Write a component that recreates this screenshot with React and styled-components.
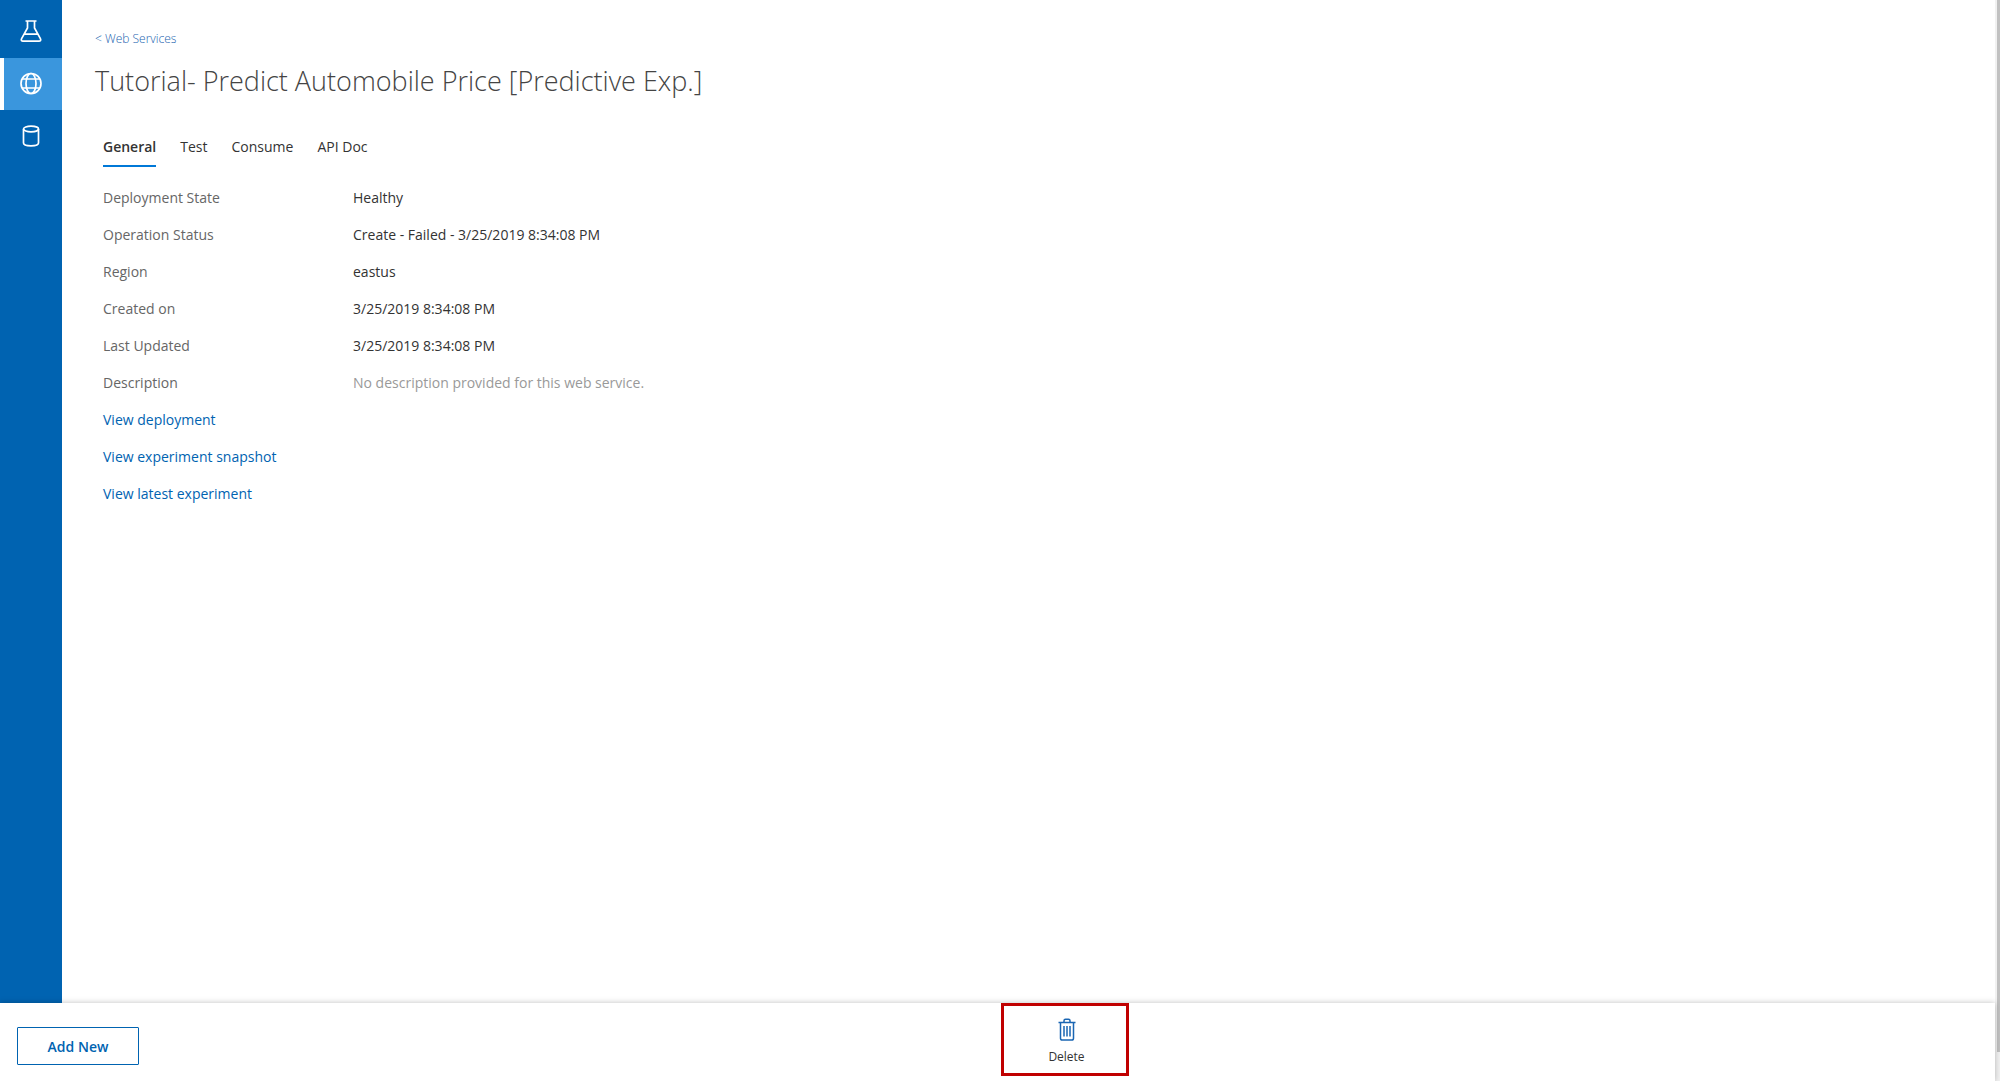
import React from "react";
import styled, { createGlobalStyle } from "styled-components";

const GlobalStyle = createGlobalStyle`
  *, *::before, *::after { box-sizing: border-box; }
  body {
    margin: 0;
    background: #ffffff;
    color: #333333;
    font-family: "Open Sans", "Noto Sans", sans-serif;
    font-size: 14px;
    line-height: 22px;
  }
  button { font-family: inherit; cursor: pointer; }
  a { text-decoration: none; }
`;

const Page = styled.div`
  display: grid;
  grid-template-columns: 1fr 5px;
  height: 100vh;
`;

const Shell = styled.div`
  display: grid;
  grid-template-rows: 1fr auto;
  min-width: 0;
`;

const Body = styled.div`
  display: flex;
  min-height: 0;
`;

const Sidebar = styled.nav`
  flex: 0 0 62px;
  display: flex;
  flex-direction: column;
  padding-top: 6px;
  background: #0063b1;
`;

const SidebarLink = styled.a`
  display: flex;
  align-items: center;
  justify-content: center;
  width: 62px;
  height: 52px;
  padding-right: ${(p) => (p.$active ? 4 : 0)}px;
  border-left: ${(p) => (p.$active ? "4px solid #ffffff" : "0")};
  background: ${(p) => (p.$active ? "#3a96dd" : "transparent")};

  svg {
    width: 22px;
    height: 24px;
    fill: none;
    stroke: #ffffff;
    stroke-width: 1.7;
  }
`;

const Main = styled.main`
  flex: 1;
  min-width: 0;
  padding: 28px 32px;
  overflow: auto;
`;

const BackLink = styled.a`
  display: block;
  padding-left: 1px;
  color: #2465b0;
  font-size: 12px;
  font-weight: 300;
`;

const Title = styled.h1`
  margin: 10px 0 0;
  padding-left: 1px;
  color: #444444;
  font-size: 27px;
  font-weight: 300;
  line-height: 42px;
`;

const Tabs = styled.div`
  display: flex;
  gap: 24px;
  margin-top: 34px;
  padding-left: 9px;
`;

const Tab = styled.button`
  padding: 0 0 7px;
  border: 0;
  border-bottom: 2px solid ${(p) => (p.$active ? "#0078d7" : "transparent")};
  background: none;
  color: #333333;
  font-size: 14px;
  font-weight: ${(p) => (p.$active ? 600 : 400)};
  line-height: 22px;
`;

const Details = styled.div`
  display: flex;
  flex-direction: column;
  gap: 15px;
  margin-top: 20px;
  padding-left: 9px;
`;

const Properties = styled.dl`
  display: grid;
  grid-template-columns: 250px 1fr;
  row-gap: 15px;
  margin: 0;
`;

const Label = styled.dt`
  color: #666666;
`;

const Value = styled.dd`
  margin: 0;
  color: ${(p) => (p.$muted ? "#999999" : "#333333")};
`;

const DetailLink = styled.a`
  align-self: flex-start;
  color: #0063b1;
`;

const Footer = styled.footer`
  display: grid;
  grid-template-columns: 1fr 1fr;
  align-items: start;
  height: 78px;
  background: #ffffff;
  box-shadow: 0 0 6px rgba(0, 0, 0, 0.25);
  position: relative;
`;

const AddButton = styled.button`
  justify-self: start;
  width: 122px;
  height: 38px;
  margin: 24px 0 0 17px;
  border: 1px solid #0063b1;
  border-radius: 1px;
  background: #ffffff;
  color: #0063b1;
  font-size: 14px;
  font-weight: 600;
`;

const DeleteButton = styled.button`
  justify-self: start;
  display: flex;
  flex-direction: column;
  align-items: center;
  gap: 5px;
  width: 128px;
  height: 73px;
  margin-left: 3px;
  padding: 12px 0 0 4px;
  border: 3px solid #c00000;
  background: #ffffff;
  color: #333333;
  font-size: 12px;
  line-height: 22px;

  svg {
    width: 18px;
    height: 23px;
    fill: none;
    stroke: #1a66b3;
    stroke-width: 1.5;
  }
`;

const ScrollTrack = styled.div`
  padding-left: 2px;
  background: #f1f1f1;
`;

const ScrollThumb = styled.div`
  height: 97.3%;
  background: #c1c1c1;
`;

const FlaskIcon = () => (
  <svg viewBox="0 0 22 24" aria-hidden="true">
    <path d="M5.500 1h11M7.500 1v7L1.600 18.600c-.8 1.500 0 2.600 1.400 2.600h16c1.400 0 2.200-1.100 1.400-2.600L14.500 8V1M4.500 14.200h13" />
  </svg>
);

const GlobeIcon = () => (
  <svg viewBox="0 0 22 24" aria-hidden="true">
    <circle cx="11" cy="11.500" r="10" />
    <ellipse cx="11" cy="11.500" rx="5" ry="10" />
    <path d="M2 7h18M2 16h18" />
  </svg>
);

const DatabaseIcon = () => (
  <svg viewBox="0 0 22 24" aria-hidden="true">
    <ellipse cx="11" cy="5" rx="7.500" ry="2.800" />
    <path d="M3.500 5v14c0 1.600 3.300 2.800 7.500 2.800s7.500-1.200 7.500-2.800V5" />
  </svg>
);

const TrashIcon = () => (
  <svg viewBox="0 0 18 23" aria-hidden="true">
    <path d="M.5 4.500h17M6 4.500V2.800C6 1.800 6.600 1.300 7.500 1.300h3c.9 0 1.500.5 1.500 1.500v1.700M2.500 4.500v15.700c0 1 .7 1.800 1.700 1.800h9.600c1 0 1.700-.8 1.700-1.800V4.500M6 8v10.500M9 8v10.500M12 8v10.500" />
  </svg>
);

const sections = [
  { name: "Experiments", Icon: FlaskIcon },
  { name: "Web Services", Icon: GlobeIcon, active: true },
  { name: "Datasets", Icon: DatabaseIcon },
];

const tabs = ["General", "Test", "Consume", "API Doc"];

const properties = [
  ["Deployment State", "Healthy"],
  ["Operation Status", "Create - Failed - 3/25/2019 8:34:08 PM"],
  ["Region", "eastus"],
  ["Created on", "3/25/2019 8:34:08 PM"],
  ["Last Updated", "3/25/2019 8:34:08 PM"],
  ["Description", "No description provided for this web service.", true],
];

const links = ["View deployment", "View experiment snapshot", "View latest experiment"];

export default function App() {
  return (
    <>
      <GlobalStyle />
      <Page>
        <Shell>
          <Body>
            <Sidebar>
              {sections.map(({ name, Icon, active }) => (
                <SidebarLink key={name} href="#" aria-label={name} $active={active}>
                  <Icon />
                </SidebarLink>
              ))}
            </Sidebar>
            <Main>
              <BackLink href="#">&lt; Web Services</BackLink>
              <Title>Tutorial- Predict Automobile Price [Predictive Exp.]</Title>
              <Tabs role="tablist">
                {tabs.map((tab, i) => (
                  <Tab key={tab} type="button" role="tab" aria-selected={i === 0} $active={i === 0}>
                    {tab}
                  </Tab>
                ))}
              </Tabs>
              <Details>
                <Properties>
                  {properties.map(([label, value, muted]) => (
                    <React.Fragment key={label}>
                      <Label>{label}</Label>
                      <Value $muted={muted}>{value}</Value>
                    </React.Fragment>
                  ))}
                </Properties>
                {links.map((text) => (
                  <DetailLink key={text} href="#">
                    {text}
                  </DetailLink>
                ))}
              </Details>
            </Main>
          </Body>
          <Footer>
            <AddButton type="button">Add New</AddButton>
            <DeleteButton type="button">
              <TrashIcon />
              Delete
            </DeleteButton>
          </Footer>
        </Shell>
        <ScrollTrack>
          <ScrollThumb />
        </ScrollTrack>
      </Page>
    </>
  );
}
